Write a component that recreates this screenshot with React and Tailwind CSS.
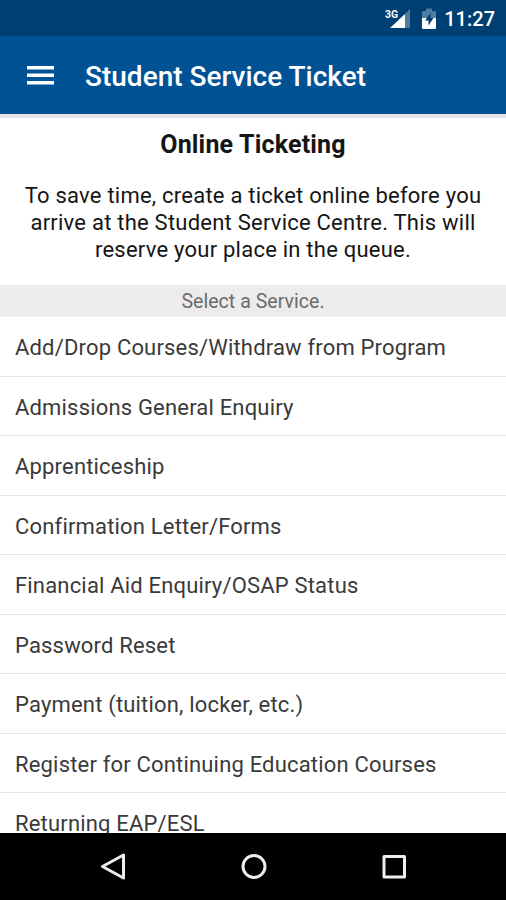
import React from "react";

const services = [
  "Add/Drop Courses/Withdraw from Program",
  "Admissions General Enquiry",
  "Apprenticeship",
  "Confirmation Letter/Forms",
  "Financial Aid Enquiry/OSAP Status",
  "Password Reset",
  "Payment (tuition, locker, etc.)",
  "Register for Continuing Education Courses",
  "Returning EAP/ESL",
];

function StatusBar() {
  return (
    <div className="h-9 shrink-0 bg-[#003f72] flex items-center justify-end pr-[11px] pt-px text-white">
      <svg width="26" height="24" viewBox="0 0 26 24" className="mr-[12px]">
        <path d="M26 2v19h-5V7z" fill="#4d7d9f" />
        <path d="M21 7v14H6z" fill="#fff" />
        <text x="1" y="11" fill="#fff" stroke="#003f72" strokeWidth="2" paintOrder="stroke" fontSize="11.500" fontWeight="700" textLength="13" lengthAdjust="spacingAndGlyphs" fontFamily="Roboto, sans-serif">3G</text>
      </svg>
      <svg width="14" height="22" viewBox="0 0 14 22" className="mr-[8px]">
        <path d="M4 0.500h6V3h3q1 0 1 1v6H0V4q0-1 1-1h3z" fill="#4d7d9f" />
        <path d="M0 10h14v10q0 1-1 1H1q-1 0-1-1z" fill="#fff" />
        <path d="M8.500 5 3 12.500h3.500V17.500l5-7.500h-3z" fill="#003f72" />
      </svg>
      <span className="text-[20px] leading-none font-medium">11:27</span>
    </div>
  );
}

function NavBar() {
  return (
    <div className="h-[67px] shrink-0 bg-black">
      <svg width="506" height="67" viewBox="0 0 506 67" fill="none" stroke="#eee" strokeWidth="3" strokeLinejoin="round">
        <path d="M123.500 22v23L102.500 33.500z" />
        <circle cx="254" cy="33.500" r="11" />
        <path d="M384 23.500h20.500v20.500h-20.500z" />
      </svg>
    </div>
  );
}

export default function App() {
  return (
    <div className="w-[506px] h-[900px] flex flex-col overflow-hidden bg-white font-[Roboto,sans-serif]">
      <StatusBar />
      <header className="h-[78px] shrink-0 bg-[#005294] flex items-center pl-[27px] text-white">
        <svg width="27" height="19" viewBox="0 0 27 19" fill="#fff">
          <path d="M0 0h27v3.500H0zM0 7.500h27V11H0zM0 15h27v3.500H0z" />
        </svg>
        <h1 className="ml-[31px] mt-[3px] text-[28px] leading-9 font-medium whitespace-nowrap">Student Service Ticket</h1>
      </header>
      <main className="flex-1 min-h-0 overflow-hidden">
        <div className="h-[171px] border-t-4 border-[#e4e4e9] pt-[11px] text-center text-[#151515]">
          <h2 className="text-[25px] leading-8 font-bold tracking-[0.18px]">Online Ticketing</h2>
          <p className="mt-[21px] text-[22px] leading-[27px] tracking-[0.23px]">
            To save time, create a ticket online before you
            <br />
            arrive at the Student Service Centre. This will
            <br />
            reserve your place in the queue.
          </p>
        </div>
        <div className="h-8 bg-[#ececec] text-center text-[19.5px] leading-[33px] tracking-[0.04px] text-[#6b6b6b]">Select a Service.</div>
        <ul>
          {services.map(name => (
            <li key={name} className="h-[59.5px] border-b border-[#e6e6e6] px-[15px] text-[22px] leading-[62px] tracking-[0.18px] text-[#3a3a3a] whitespace-nowrap">
              {name}
            </li>
          ))}
        </ul>
      </main>
      <NavBar />
    </div>
  );
}
